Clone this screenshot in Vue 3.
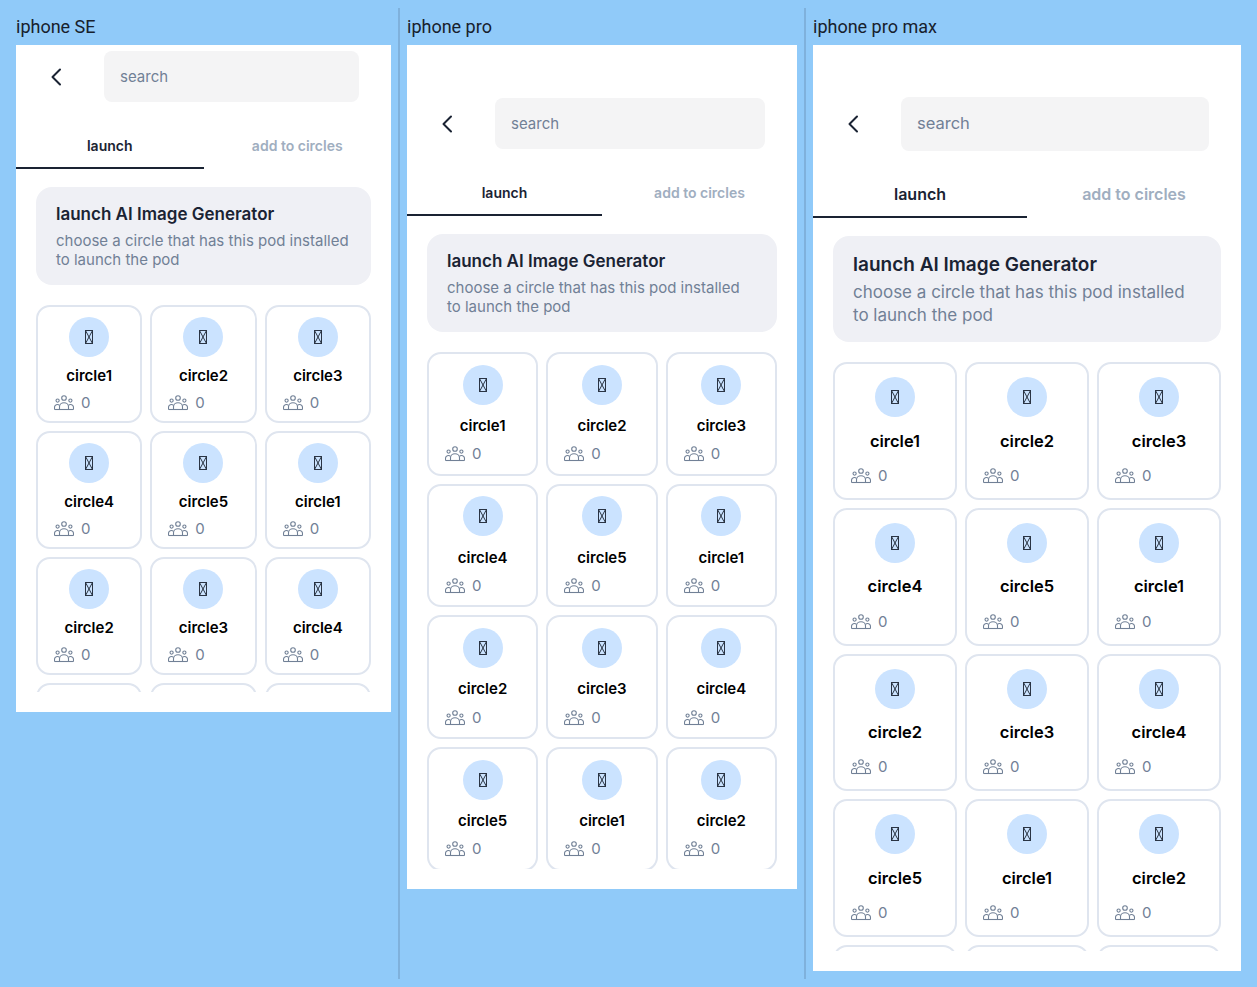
<script setup>
const names = ['circle1', 'circle2', 'circle3', 'circle4', 'circle5']

// each preview gets a few more rows than it can show, the grid clips them
const circles = Array.from({ length: 15 }, (_, i) => names[i % names.length])

const devices = [
  { label: 'iphone SE', size: 'se' },
  { label: 'iphone pro', size: 'pro' },
  { label: 'iphone pro max', size: 'max' }
]
</script>

<template>
  <main class="page">
    <section v-for="device in devices" :key="device.size" class="device" :class="`device--${device.size}`">
      <h2 class="device__label">{{ device.label }}</h2>
      <div class="screen">
        <header class="topbar">
          <button class="back" aria-label="back">
            <svg width="24" height="24" viewBox="0 0 24 24" fill="none" stroke="#1a2333" stroke-width="2" stroke-linecap="round" stroke-linejoin="round">
              <path d="M16 4.5 8.5 12l7.5 7.5" />
            </svg>
          </button>
          <div class="search">search</div>
        </header>

        <nav class="tabs">
          <div class="tab tab--active">launch</div>
          <div class="tab">add to circles</div>
        </nav>

        <div class="body">
          <div class="intro">
            <h3 class="intro__title">launch AI Image Generator</h3>
            <p class="intro__text">choose a circle that has this pod installed to launch the pod</p>
          </div>

          <div class="grid">
            <article v-for="(name, idx) in circles" :key="idx" class="card">
              <span class="card__avatar">
                <svg width="8" height="14" viewBox="0 0 8 14" fill="none" stroke="#2a3444" stroke-width="1">
                  <rect x="0.5" y="0.5" width="7" height="13" />
                  <path d="M0.5 0.5 7.5 13.5M7.5 0.5 0.5 13.5" />
                </svg>
              </span>
              <div class="card__name">{{ name }}</div>
              <div class="card__meta">
                <svg width="20" height="16" viewBox="0 0 20 16" fill="none" stroke="#718096" stroke-width="1.1">
                  <circle cx="10" cy="3" r="2.3" />
                  <circle cx="3.6" cy="5.6" r="1.6" />
                  <circle cx="16.4" cy="5.6" r="1.6" />
                  <path d="M5.5 14.5v-2.7a4.5 4 0 0 1 9 0v2.7" />
                  <path d="M0.5 14.5v-2a3 3 0 0 1 5-2.2M19.5 14.5v-2a3 3 0 0 0-5-2.2" />
                  <path d="M0.5 14.5h19" />
                </svg>
                <span>0</span>
              </div>
            </article>
          </div>
        </div>
      </div>
    </section>
  </main>
</template>

<style scoped>
.page {
  display: flex;
  height: 987px;
  box-sizing: border-box;
  padding: 8px 0;
  overflow: hidden;
  background: #90caf9;
  color: #111827;
  font-family: Inter, "Noto Sans", sans-serif;
}

.device {
  flex: none;
  padding: 0 8px 0 16px;
}

.device + .device {
  margin-left: -1px;
  padding-left: 7px;
  border-left: 2px solid #7fb1dc;
}

.device--se {
  width: 375px;
  --card-top: 10px;
  --name-gap: 8px;
  --meta-bottom: 10px;
}

.device--pro {
  width: 390px;
  --top-inset: 47px;
  --card-top: 10.5px;
  --name-gap: 10.5px;
  --meta-bottom: 11.5px;
}

.device--max {
  width: 428px;
  --top-inset: 46px;
  --card-top: 13px;
  --name-gap: 12.5px;
  --meta-bottom: 14px;
}

.device__label {
  height: 37px;
  margin: 0;
  padding-top: 8px;
  box-sizing: border-box;
  font-family: Roboto, sans-serif;
  font-size: 18px;
  font-weight: 400;
  line-height: 21px;
  color: #17202c;
}

.screen {
  display: flex;
  flex-direction: column;
  box-sizing: border-box;
  padding-top: var(--top-inset, 0);
  padding-bottom: 20px;
  background: #fff;
}

.device--se .screen { height: 667px; }
.device--pro .screen { height: 844px; }
.device--max .screen { height: 926px; }

.topbar {
  display: flex;
  align-items: center;
  padding: 6px 32px 0 28px;
  gap: 36px;
}

.back {
  display: flex;
  flex: none;
  width: 24px;
  padding: 0;
  border: 0;
  background: none;
}

.search {
  flex: 1;
  height: 51px;
  padding-left: 16px;
  border-radius: 8px;
  background: #f4f4f5;
  color: #718096;
  font-size: 15px;
  line-height: 51px;
}

.tabs {
  display: flex;
  margin-top: 19px;
}

.tab {
  flex: 1;
  height: 48px;
  box-sizing: border-box;
  padding-top: 2px;
  border-bottom: 2px solid transparent;
  color: #a0aec0;
  font-size: 14px;
  font-weight: 600;
  line-height: 46px;
  text-align: center;
}

.tab--active {
  border-bottom-color: #1a2333;
  color: #1a2333;
}

.body {
  display: flex;
  flex: 1;
  flex-direction: column;
  min-height: 0;
  padding: 18px 20px 0;
}

.intro {
  padding: 16px 20px;
  border-radius: 16px;
  background: #eff0f5;
}

.intro__title {
  margin: 0 0 5px;
  color: #1a2333;
  font-size: 17px;
  font-weight: 600;
  line-height: 23px;
}

.intro__text {
  margin: 0;
  color: #718096;
  font-size: 15px;
  line-height: 19px;
}

.grid {
  display: grid;
  flex: 1;
  grid-template-columns: repeat(3, 1fr);
  align-content: start;
  gap: 8px;
  min-height: 0;
  margin-top: 20px;
  overflow: hidden;
}

.card {
  display: flex;
  flex-direction: column;
  align-items: center;
  aspect-ratio: 0.9;
  box-sizing: border-box;
  padding-top: var(--card-top);
  border: 2px solid #dfe5ef;
  border-radius: 14px;
}

.card__avatar {
  display: flex;
  flex: none;
  align-items: center;
  justify-content: center;
  width: 40px;
  height: 40px;
  border-radius: 50%;
  background: #cbe3ff;
}

.card__name {
  margin-top: var(--name-gap);
  color: #000;
  font-size: 15px;
  font-weight: 600;
  line-height: 22px;
}

.card__meta {
  display: flex;
  align-items: center;
  align-self: flex-start;
  gap: 7px;
  margin-top: auto;
  margin-bottom: var(--meta-bottom);
  padding-left: 16px;
  color: #718096;
  font-size: 15px;
  line-height: 16px;
}

.device--max .search {
  height: 54px;
  font-size: 16.5px;
  line-height: 52px;
}

.device--max .tab { font-size: 16px; line-height: 44px; }
.device--max .intro { padding-top: 17px; padding-bottom: 15px; }
.device--max .intro__title { font-size: 19px; }
.device--max .intro__text { font-size: 17px; line-height: 23px; }
.device--max .card__name { font-size: 16.5px; }
</style>

<style>
body {
  background: #90caf9;
}
</style>
